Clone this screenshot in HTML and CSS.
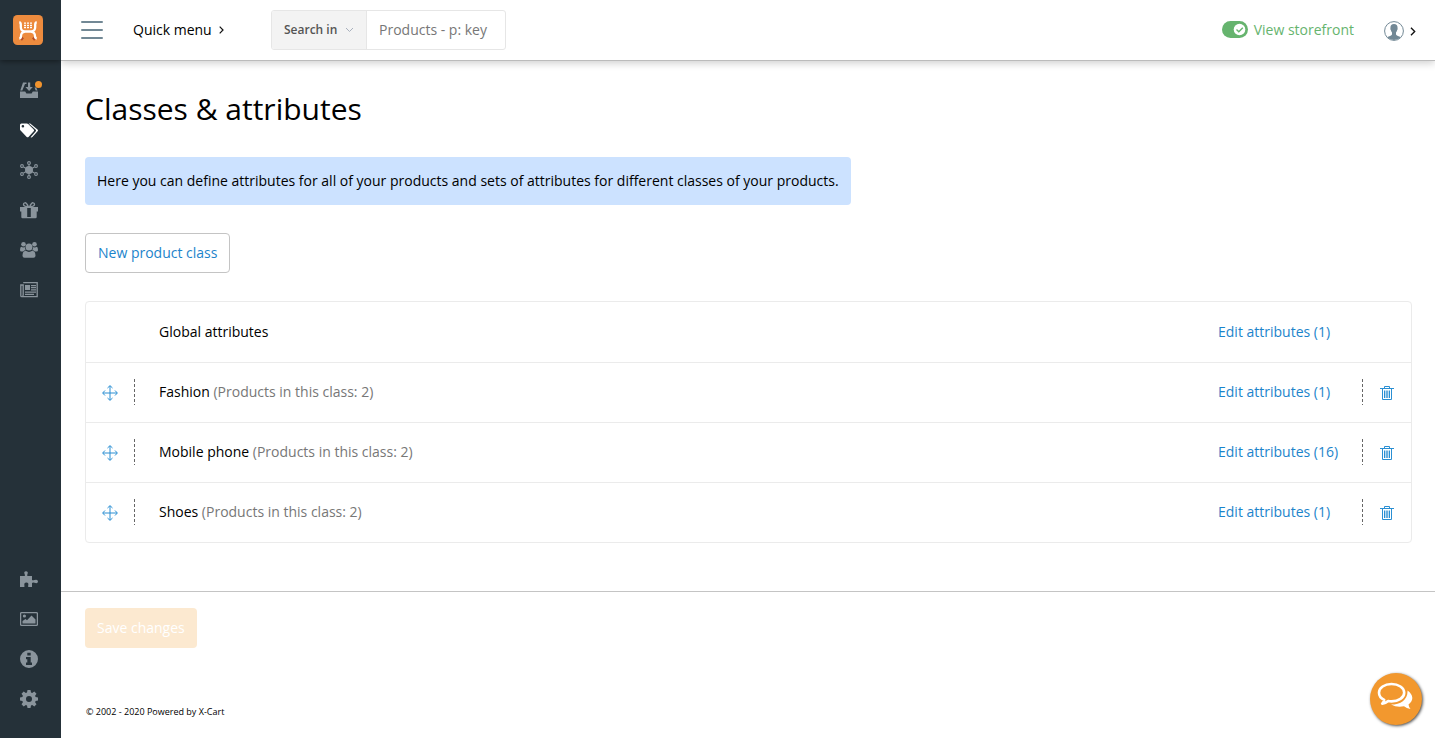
FILE: index.html
```html
<!DOCTYPE html>
<html lang="en">
<head>
<meta charset="utf-8">
<title>Classes &amp; attributes</title>
<link rel="stylesheet" href="styles.css">
</head>
<body>
<svg class="defs" width="0" height="0">
  <symbol id="move" viewBox="0 0 16 16"><path d="M8 1v14M1 8h14M5.500 3 8 .6 10.500 3M5.500 13 8 15.400 10.500 13M3 5.500.6 8 3 10.500M13 5.500 15.400 8 13 10.500"/></symbol>
  <symbol id="trash" viewBox="0 0 14 14"><path d="M0 2.500h14M4.500 2.500v-2h5v2M2.500 2.500v11h9v-11M4.500 4.500v7.500M6.200 4.500v7.500M7.800 4.500v7.500M9.500 4.500v7.500"/></symbol>
  <symbol id="chevron" viewBox="0 0 5 8"><path d="M.7.7 4 4 .7 7.300"/></symbol>
</svg>
<div class="app">
  <aside class="sidebar">
    <a class="logo">
      <svg width="30" height="30" viewBox="0 0 30 30"><rect width="30" height="30" rx="4.500" fill="#ed8b3e"/><path d="M8 25 10 22.500M22 25 20 22.500" stroke="#b54d25" stroke-width="2.500"/><path d="M6.300 7.200q1.500.3 1.500 2.500v2.300q0 4.300 4 4.500h6.400q4-.2 4-4.500V9.700q0-2.200 1.500-2.500M12 16.700q-4 .8-4 4.300 0 2.200-1.700 2.500M18 16.700q4 .8 4 4.300 0 2.200 1.700 2.500" fill="none" stroke="#fff" stroke-width="2.300"/><path d="M11 8.200h8M11 10.500h8M11 12.700h8" stroke="#fff" stroke-width="1.300" stroke-dasharray="2 1"/></svg>
    </a>
    <nav class="nav">
      <a class="nav-item"><svg width="18" height="18" viewBox="0 0 18 18"><path d="M0 10.500h5.200l1.200 2h5.200l1.200-2H18V17H0z"/><path d="M3 1.500h3.500V3H5L2.300 9.500H.3zM14.500 6.500h1.700l1.400 3h-1.900z"/><path d="M8 1.500h2.200V6h2.600L9.100 10 5.400 6H8z"/></svg><i class="dot"></i></a>
      <a class="nav-item active"><svg width="18" height="18" viewBox="0 0 18 18"><path fill-rule="evenodd" d="M0 4Q0 2.500 1.500 2.500h5.300q.8 0 1.400.6l5.500 5.400q.9.900 0 1.800l-5.200 5.600q-.9.900-1.800 0L.6 9.600Q0 9 0 8.200zM2.900 4a1.300 1.300 0 1 0 0 2.600 1.300 1.300 0 0 0 0-2.600z"/><path d="M8.700 2.500h1.500l7.300 6.100q.9.800.1 1.700l-5.200 5.700q-.8.800-1.800.2l5-5.800q.9-1-.1-1.900z"/></svg></a>
      <a class="nav-item"><svg width="18" height="18" viewBox="0 0 18 18"><circle cx="9" cy="9" r="4"/><g class="ring"><path d="M9 3v12M3.500 6l11 6M3.500 12l11-6"/><circle cx="9" cy="2" r="1.400"/><circle cx="9" cy="16" r="1.400"/><circle cx="2" cy="5" r="1.400"/><circle cx="16" cy="5" r="1.400"/><circle cx="2" cy="13" r="1.400"/><circle cx="16" cy="13" r="1.400"/></g></svg></a>
      <a class="nav-item"><svg width="18" height="18" viewBox="0 0 18 18"><path fill-rule="evenodd" d="M0 6h18v4.500h-1.300V16q0 1.200-1.200 1.200h-13q-1.200 0-1.200-1.200v-5.500H0zM7.200 7v9h3.600V7z"/><path class="line" d="M8.500 6C7 2.500 6 1.500 4.800 1.800 3 2.200 3 4.500 5 5.200zM9.500 6C11 2.500 12 1.500 13.200 1.800 15 2.200 15 4.500 13 5.200z"/></svg></a>
      <a class="nav-item"><svg width="18" height="18" viewBox="0 0 18 18"><circle cx="3.500" cy="3.300" r="2.300"/><circle cx="14.500" cy="3.300" r="2.300"/><circle cx="9" cy="6" r="3.500"/><path d="M0 8.900Q0 5.900 1.500 5.800 3 6.900 4.800 6q0 2 1 3.200Q4 9.300 3.200 10.400H1.500Q0 10.400 0 8.900zM18 8.900q0-3-1.500-3.100-1.500 1.100-3.300.2 0 2-1 3.200 1.800.1 2.600 1.200h1.700Q18 10.400 18 8.900z"/><path d="M5.700 9.800Q9 12 12.300 9.800q3.200.2 3.200 5 0 2-2 2h-9q-2 0-2-2 0-4.800 3.200-5z"/></svg></a>
      <a class="nav-item"><svg width="18" height="18" viewBox="0 0 18 18"><path class="line" d="M3.200 1.700h14v14H1.800q-1 0-1-1V4h2.400v10q0 1.700-1.400 1.700"/><path d="M5 4h5v5H5zM11 4h5v1.200h-5zM11 6h5v1.200h-5zM11 8.200h5v1.200h-5zM5 10.500h11v1.200H5zM5 12.800h9v1.200H5z"/></svg></a>
    </nav>
    <nav class="nav nav-bottom">
      <a class="nav-item"><svg width="18" height="18" viewBox="0 0 18 18"><path d="M0 6h4.800Q5.200 5 4.500 3.800 3.600 1.200 6 1.200T7.600 3.800Q6.900 5 7.400 6H12v4q1 .7 2.400 0Q17.800 8.800 18 11.500q-.2 2.700-3.600 1.300Q13 12 12 13v4H8.200v-1.700Q9 12.700 6.400 12.500 3.800 12.700 4.400 15.300V17H0z"/></svg></a>
      <a class="nav-item"><svg width="18" height="18" viewBox="0 0 18 18"><rect class="line" x=".6" y="2.600" width="16.800" height="12.800" rx="1"/><circle cx="4.400" cy="6" r="1.600"/><path d="M2.500 13.500V11l3-2 1.500 1.200L11.500 5.500 15.500 9.500v4z"/></svg></a>
      <a class="nav-item"><svg width="18" height="18" viewBox="0 0 18 18"><path fill-rule="evenodd" d="M9 0a9 9 0 1 0 0 18A9 9 0 0 0 9 0zM7.300 2.800h3.400v2.700H7.300zM6 7h4.700v5.600H12V15H6v-2.400h1.300V9.300H6z"/></svg></a>
      <a class="nav-item"><svg width="18" height="18" viewBox="0 0 18 18"><path fill-rule="evenodd" d="M7.500 0h3l.5 2.400 1.200.5 2.100-1.400 2.200 2.200-1.400 2.100.5 1.200 2.400.5v3l-2.400.5-.5 1.200 1.400 2.100-2.200 2.200-2.100-1.400-1.200.5-.5 2.400h-3L7 15.600l-1.200-.5-2.100 1.400-2.200-2.200 1.400-2.100L2.400 11 0 10.500v-3L2.400 7l.5-1.200-1.400-2.100 2.200-2.200 2.100 1.400L7 2.400zM9 6a3 3 0 1 0 0 6 3 3 0 0 0 0-6z"/></svg></a>
    </nav>
  </aside>
  <div class="page">
    <header class="header">
      <span class="burger"><i></i><i></i><i></i></span>
      <a class="quick">Quick menu <svg class="chev" width="5" height="8"><use href="#chevron"/></svg></a>
      <div class="search">
        <span class="search-in">Search in <svg class="down" width="9" height="6" viewBox="0 0 9 6"><path d="M1 1 4.500 4.500 8 1"/></svg></span>
        <span class="search-field">Products - p: key</span>
      </div>
      <a class="storefront"><svg width="26" height="17" viewBox="0 0 26 17"><rect width="26" height="17" rx="8.500" fill="#66b46e"/><circle cx="17.500" cy="8.500" r="5.800" fill="#fff"/><path d="m14.500 8.500 2.300 2.200 4-4" fill="none" stroke="#66b46e" stroke-width="1.400"/></svg>View storefront</a>
      <a class="account"><svg width="20" height="20" viewBox="0 0 20 20"><circle cx="10" cy="10" r="9.400" fill="#fff" stroke="#728895"/><path fill="#728895" d="M10 3c2.800 0 3.800 1.700 3.500 4.200.4.600.1 1.600-.4 2-.2 1-.6 1.700-1.100 2.200v2c.3 1.300 3.200 1.500 4.700 2.800A9.400 9.400 0 0 1 3.300 16.200C4.800 14.900 7.700 14.700 8 13.400v-2C7.500 10.900 7.100 10.200 6.900 9.200c-.5-.4-.8-1.400-.4-2C6.200 4.700 7.200 3 10 3z"/></svg><svg class="chev" width="6" height="9"><use href="#chevron"/></svg></a>
    </header>
    <main class="content">
      <h1 class="title">Classes &amp; attributes</h1>
      <p class="notice">Here you can define attributes for all of your products and sets of attributes for different classes of your products.</p>
      <button class="btn">New product class</button>
      <div class="list">
        <div class="row"><span class="drag"></span><span class="name">Global attributes</span><a class="edit">Edit attributes (1)</a><span class="remove"></span></div>
        <div class="row"><span class="drag dashed"><svg width="16" height="16"><use href="#move"/></svg></span><span class="name">Fashion <em>(Products in this class: 2)</em></span><a class="edit">Edit attributes (1)</a><span class="remove dashed"><svg width="14" height="14"><use href="#trash"/></svg></span></div>
        <div class="row"><span class="drag dashed"><svg width="16" height="16"><use href="#move"/></svg></span><span class="name">Mobile phone <em>(Products in this class: 2)</em></span><a class="edit">Edit attributes (16)</a><span class="remove dashed"><svg width="14" height="14"><use href="#trash"/></svg></span></div>
        <div class="row"><span class="drag dashed"><svg width="16" height="16"><use href="#move"/></svg></span><span class="name">Shoes <em>(Products in this class: 2)</em></span><a class="edit">Edit attributes (1)</a><span class="remove dashed"><svg width="14" height="14"><use href="#trash"/></svg></span></div>
      </div>
    </main>
    <div class="actions"><button class="btn save">Save changes</button></div>
    <footer class="footer">© 2002 - 2020 Powered by X-Cart</footer>
  </div>
</div>
<a class="chat"><svg width="36" height="30" viewBox="0 0 36 30"><path fill="#fff" d="M30.500 8.500C37 13 36.500 19 31.500 22.500q.3 2.500 2 4.500-4-.5-6.500-2.800-7 1.500-13-1.700c10 0 17-5 16.500-14z"/><path fill="none" stroke="#fff" stroke-width="2.600" stroke-linejoin="round" d="M14.500 2C7.500 2 2 5.800 2 10.700c0 3 2 5.600 5.200 7.200q-.3 2-2 3.700 3.500-.5 6-2.600 1.500.4 3.300.4c7 0 12.700-3.900 12.700-8.700S21.500 2 14.500 2z"/></svg></a>
</body>
</html>
```
FILE: styles.css
```css
* { box-sizing: border-box; }
body { margin: 0; background: #fff; color: #000; font: 14px/20px "Open Sans", sans-serif; overflow: hidden; }
svg { display: block; flex: none; }
.defs { position: absolute; }
.app { display: flex; height: 738px; }
.sidebar { width: 61px; flex: none; background: #253139; display: flex; flex-direction: column; }
.logo { height: 60px; padding: 15px 0 0 13px; margin-bottom: 10px; box-shadow: 0 1px 6px rgba(0, 0, 0, .5); clip-path: inset(0 0 -10px 0); }
.nav-item { display: flex; align-items: center; height: 40px; padding-left: 20px; position: relative; fill: #8a949c; color: #8a949c; }
.nav-item.active { fill: #fff; }
.nav-bottom { margin: auto 0 19px; }
.line { fill: none; stroke: #8a949c; stroke-width: 1.3; }
.ring { fill: none; stroke: #8a949c; stroke-width: 1.1; }
.dot { position: absolute; left: 35px; top: 11px; width: 7px; height: 7px; border-radius: 50%; background: #f2942e; }
.page { flex: 1; display: flex; flex-direction: column; min-width: 0; }
.header { height: 61px; flex: none; border-bottom: 1px solid #bbb; box-shadow: 0 2px 8px rgba(0, 0, 0, .2); display: flex; align-items: center; padding: 0 18px 0 20px; clip-path: inset(0 0 -12px 0); }
.burger { width: 22px; display: flex; flex-direction: column; gap: 6px; }
.burger i { height: 2px; background: #728895; border-radius: 1px; }
.quick { display: flex; align-items: center; gap: 7px; margin-left: 30px; width: 138px; }
.chev { fill: none; stroke: #111; stroke-width: 1.2; }
.search { width: 235px; height: 40px; border: 1px solid #e6e6e6; border-radius: 3px; display: flex; overflow: hidden; }
.search-in { width: 95px; flex: none; padding-left: 12px; background: #f3f3f3; border-right: 1px solid #e6e6e6; font-size: 12px; font-weight: 600; color: #555; display: flex; align-items: center; gap: 8px; white-space: nowrap; }
.down { fill: none; stroke: #a8b0bd; }
.search-field { padding: 9px 0 0 12px; color: #777; white-space: nowrap; }
.storefront { display: flex; align-items: center; gap: 6px; color: #66b46e; margin-left: auto; }
.account { display: flex; align-items: center; gap: 6px; margin-left: 30px; padding: 2px 1px 0 0; }
.storefront svg { margin-top: -1px; }
.content { padding: 24px 23px 48px 24px; }
.title { margin: 0; font-size: 30px; line-height: 48px; font-weight: 400; }
.notice { margin: 24px 0 28px; width: 766px; height: 48px; padding: 14px 12px; border-radius: 4px; background: #cce2ff; white-space: nowrap; }
.btn { display: block; height: 40px; padding: 0 12px; border: 1px solid #c4c4c4; border-radius: 4px; background: #fff; color: #1c84cb; font: inherit; }
.list { margin-top: 28px; border: 1px solid #ebebeb; border-radius: 4px; }
.row { height: 60px; display: flex; align-items: center; }
.row + .row { border-top: 1px solid #ebebeb; padding-bottom: 1px; }
.drag { width: 49px; height: 26px; flex: none; padding: 6px 0 0 16px; }
.remove { width: 49px; height: 26px; flex: none; padding: 7px 0 0 18px; }
.drag svg, .remove svg { fill: none; stroke: #2a8fd3; stroke-width: 1; }
.drag.dashed { background: repeating-linear-gradient(#666 0 3px, transparent 3px 5px) right / 1px 100% no-repeat; }
.remove.dashed { background: repeating-linear-gradient(#666 0 3px, transparent 3px 5px) left / 1px 100% no-repeat; }
.name { flex: 1; padding-left: 24px; }
.name em { font-style: normal; color: #777; }
.edit { width: 144px; color: #1c84cb; white-space: nowrap; }
.actions { border-top: 1px solid #c4c4c4; padding: 16px 24px; }
.save { border: 0; background: #fce9d0; color: #fff; }
.footer { margin: 44px 0 0 25px; font-size: 9px; line-height: 8px; }
.chat { position: fixed; left: 1370px; top: 673px; width: 52px; height: 52px; border-radius: 50%; background: #f2982e; box-shadow: 1px 1px 3px rgba(0, 0, 0, .7); padding: 9px 0 0 7px; }
```
